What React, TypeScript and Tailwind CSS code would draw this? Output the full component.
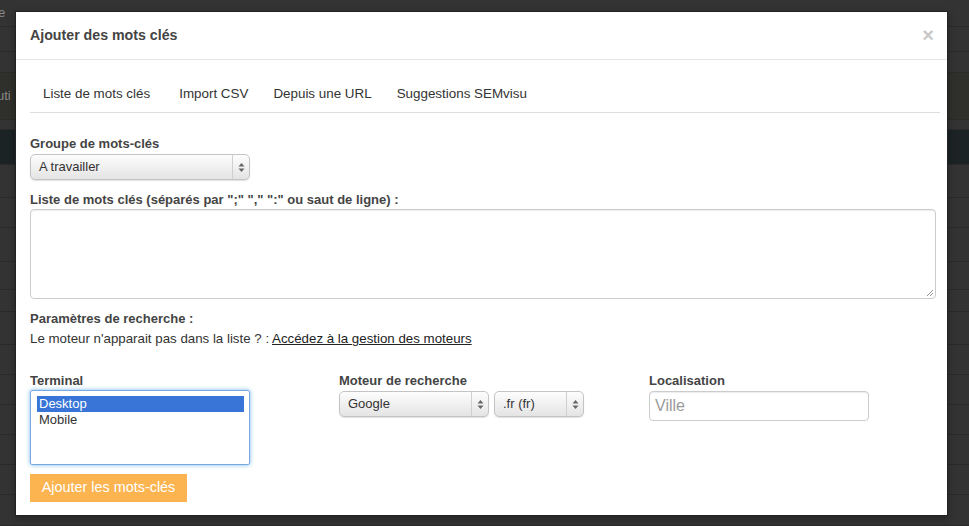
import React from "react";

function Arrows() {
  return (
    <svg width="7" height="11" viewBox="0 0 7 11">
      <path d="M3.5 1 L6.5 4.5 L0.5 4.5 Z" fill="#666" />
      <path d="M3.5 10 L6.5 6.5 L0.5 6.5 Z" fill="#666" />
    </svg>
  );
}

function FakeSelect({ label, width }: { label: string; width: number }) {
  return (
    <div
      className="h-[26px] flex items-stretch rounded-[5px] border border-[#c4c4c4] bg-gradient-to-b from-[#fdfdfd] to-[#e4e4e4] shadow-[0_1px_1px_rgba(0,0,0,0.12)]"
      style={{ width }}
    >
      <div className="flex-1 flex items-center text-[13px] text-[#333] pl-[8px]">{label}</div>
      <div className="w-[17px] border-l border-[#d0d0d0] flex items-center justify-center">
        <Arrows />
      </div>
    </div>
  );
}

export default function App() {
  const rows = [27, 25, 21, 47, 10, 35, 33, 30, 34, 28, 22, 33, 30, 30, 30, 30, 30, 31];
  return (
    <div
      className="relative w-[969px] h-[526px] overflow-hidden bg-[#333333]"
      style={{ fontFamily: '"Liberation Sans", Arial, Helvetica, sans-serif' }}
    >
      {/* underlying page (dimmed) */}
      <div className="flex flex-col">
        {rows.map((h, i) => (
          <div
            key={i}
            className={`border-b border-[#2a2a2a] flex items-center text-[13px] text-[#8a8a8a] ${
              i === 3 ? "bg-[#2f302b]" : i === 5 ? "bg-[#1c2325]" : "bg-[#333333]"
            }`}
            style={{ height: h }}
          >
            {i === 0 ? <span className="-ml-[2px]">e</span> : null}
            {i === 3 ? <span className="-ml-[3px]">uti</span> : null}
          </div>
        ))}
      </div>

      {/* modal */}
      <div className="absolute left-[15px] top-[11px] w-[933px] h-[505px] bg-white shadow-[0_3px_7px_rgba(0,0,0,0.3)] border border-[#222] flex flex-col">
        <div className="h-[48px] shrink-0 border-b border-[#e5e5e5] flex items-center justify-between pl-[14px] pr-[13px]">
          <h3 className="text-[14.2px] font-bold text-[#444]">Ajouter des mots clés</h3>
          <span className="text-[20px] font-bold text-[#c8c8c8] leading-none -mt-[2px]">×</span>
        </div>

        <div className="pl-[14px] pr-[7px] flex flex-col">
          <div className="mt-[16px] h-[37px] border-b border-[#dddddd] flex items-center text-[13.4px] text-[#333]">
            <span className="ml-[13px] mr-[29px]">Liste de mots clés</span>
            <span className="mr-[25px]">Import CSV</span>
            <span className="mr-[25px]">Depuis une URL</span>
            <span>Suggestions SEMvisu</span>
          </div>

          <div className="mt-[22px] h-[18px] leading-[18px] text-[13px] font-bold text-[#444]">Groupe de mots-clés</div>
          <div className="mt-[1px]">
            <FakeSelect label="A travailler" width={220} />
          </div>

          <div className="mt-[11px] h-[18px] leading-[18px] text-[13px] font-bold text-[#444]">
            Liste de mots clés (séparés par ";" "," ":" ou saut de ligne) :
          </div>
          <div className="relative mt-[0px] w-[906px] h-[90px] rounded-[4px] border border-[#cccccc] shadow-[inset_0_1px_1px_rgba(0,0,0,0.075)]">
            <svg className="absolute right-[1px] bottom-[1px]" width="8" height="8" viewBox="0 0 8 8">
              <path d="M7 1 L1 7 M7 4 L4 7" stroke="#999" strokeWidth="1" />
            </svg>
          </div>

          <div className="mt-[11px] h-[18px] leading-[18px] text-[13px] font-bold text-[#444]">Paramètres de recherche :</div>
          <div className="mt-[2px] h-[18px] leading-[18px] text-[13.3px] text-[#333]">
            Le moteur n'apparait pas dans la liste ? : <span className="underline text-[#222]">Accédez à la gestion des moteurs</span>
          </div>

          <div className="mt-[24px] flex">
            <div className="w-[309px] flex flex-col">
              <div className="h-[18px] leading-[18px] text-[13px] font-bold text-[#444]">Terminal</div>
              <div className="w-[220px] h-[75px] border border-[#7aa7dc] rounded-[2px] shadow-[0_0_4px_rgba(82,168,236,0.8)] p-[5px] pl-[6px] text-[13px]">
                <div className="h-[16px] leading-[16px] bg-[#3875d7] text-white pl-[2px]">Desktop</div>
                <div className="h-[16px] leading-[16px] text-[#333] pl-[2px]">Mobile</div>
              </div>
            </div>
            <div className="w-[310px] flex flex-col">
              <div className="h-[18px] leading-[18px] text-[13px] font-bold text-[#444]">Moteur de recherche</div>
              <div className="mt-[1px] flex gap-[5px]">
                <FakeSelect label="Google" width={150} />
                <FakeSelect label=".fr (fr)" width={90} />
              </div>
            </div>
            <div className="flex flex-col">
              <div className="h-[18px] leading-[18px] text-[13px] font-bold text-[#444]">Localisation</div>
              <div className="mt-[1px] w-[220px] h-[30px] rounded-[4px] border border-[#cccccc] shadow-[inset_0_1px_1px_rgba(0,0,0,0.075)] flex items-center pl-[5px] text-[16px] text-[#9a9a9a]">
                Ville
              </div>
            </div>
          </div>

          <div className="mt-[9px] w-[157px] h-[28px] bg-[#fbb450] flex items-center justify-center text-[14.4px] text-white">
            Ajouter les mots-clés
          </div>
        </div>
      </div>
    </div>
  );
}
